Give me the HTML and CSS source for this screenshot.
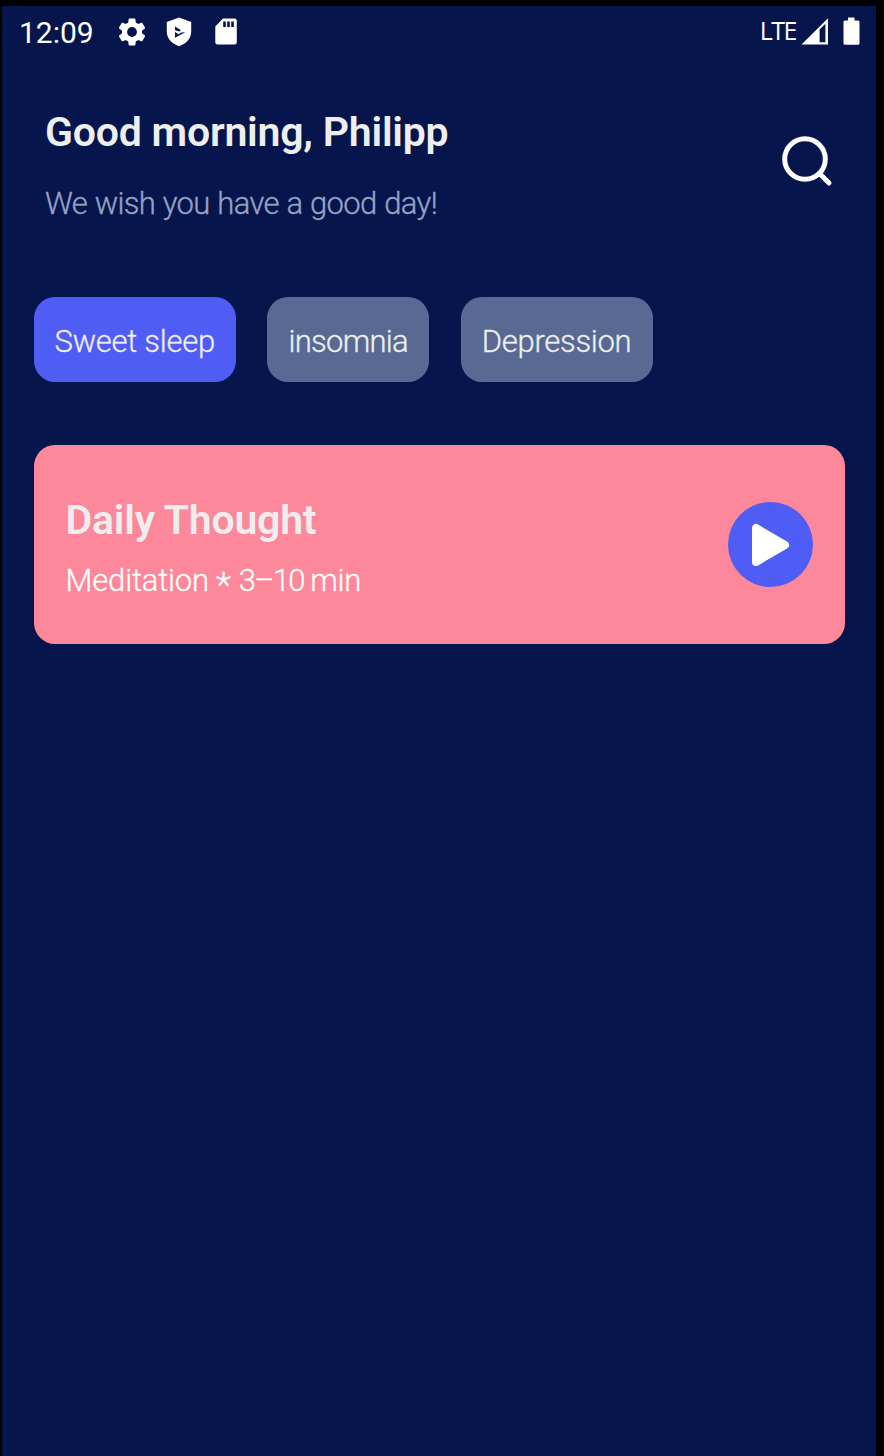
FILE: index.html
```html
<!DOCTYPE html>
<html lang="en">
<head>
<meta charset="utf-8">
<title>Meditation</title>
<link rel="stylesheet" href="styles.css">
</head>
<body>
<div class="screen">
  <div class="status-bar">
    <span class="clock">12:09</span>
    <svg class="gear" width="28" height="28" viewBox="2 2 20 20" fill="#fff"><path d="M19.14 12.94c.04-.3.06-.61.06-.94s-.02-.64-.07-.94l2.03-1.58a.49.49 0 0 0 .12-.61l-1.92-3.32a.49.49 0 0 0-.59-.22l-2.39.96a7 7 0 0 0-1.62-.94l-.36-2.54a.48.48 0 0 0-.48-.41h-3.84a.48.48 0 0 0-.47.41l-.36 2.54c-.59.24-1.13.57-1.62.94l-2.39-.96a.49.49 0 0 0-.59.22L2.74 8.87a.49.49 0 0 0 .12.61l2.03 1.58a7.5 7.5 0 0 0 0 1.88l-2.03 1.58a.49.49 0 0 0-.12.61l1.92 3.32c.12.22.37.29.59.22l2.39-.96c.5.38 1.03.7 1.62.94l.36 2.54c.05.24.24.41.48.41h3.84c.24 0 .44-.17.47-.41l.36-2.54c.59-.24 1.13-.56 1.62-.94l2.39.96c.22.08.47 0 .59-.22l1.92-3.32a.49.49 0 0 0-.12-.61zM12 15.500a3.500 3.500 0 1 1 0-7 3.500 3.500 0 0 1 0 7z"/></svg>
    <svg class="shield" width="26" height="30" viewBox="0 0 26 30"><path fill="#fff" d="M13 .5 25.200 5v9.500c0 6.700-4.700 12.200-12.200 14.700C5.500 26.700.8 21.200.8 14.500V5z"/><path fill="#06154b" d="M9 9.500 14.800 13l-1.300 1.500L9 13.200zM15.500 15.500l3.800-.3L9 20.800V15l3.500 2.200z"/></svg>
    <svg class="sd" width="22" height="27" viewBox="0 0 22 27"><path fill="#fff" d="M8 .5h11.500a2.300 2.300 0 0 1 2.300 2.300v21.400a2.300 2.300 0 0 1-2.300 2.300h-17A2.300 2.300 0 0 1 .3 24.200V8.500z"/><path stroke="#06154b" stroke-width="2.600" d="M9.500 3.500V9M13.500 3.500V9M17.500 3.500V9"/></svg>
    <span class="network">LTE</span>
    <svg class="signal" width="28" height="27" viewBox="0 0 28 27"><path fill="#fff" fill-rule="evenodd" d="M.5 26.500 27 .3v26.200zM18.600 11.500v12.800h5.800V5.800z"/></svg>
    <svg class="battery" width="17" height="28" viewBox="0 0 17 28"><path fill="#fff" d="M5 .5h6.500v3H15a1.500 1.500 0 0 1 1.500 1.500v21.200a1.500 1.500 0 0 1-1.500 1.500H2A1.500 1.500 0 0 1 .5 26.200V5A1.500 1.500 0 0 1 2 3.500h3z"/></svg>
  </div>
  <header class="header">
    <div>
      <h1 class="title">Good morning, Philipp</h1>
      <p class="subtitle">We wish you have a good day!</p>
    </div>
    <svg class="search" width="52" height="52" viewBox="0 0 52 52" fill="none" stroke="#fff" stroke-width="5" stroke-linecap="round"><circle cx="24" cy="24" r="20.300"/><path d="m38.500 38.500 9.500 9.500"/></svg>
  </header>
  <nav class="chips">
    <div class="chip active">Sweet sleep</div>
    <div class="chip insomnia">insomnia</div>
    <div class="chip depression">Depression</div>
  </nav>
  <section class="card">
    <div class="card-text">
      <h2 class="title">Daily Thought</h2>
      <p class="detail">Meditation <span class="star">*</span> <span class="range">3–10</span> min</p>
    </div>
    <div class="play"><svg width="39" height="44" viewBox="0 0 39 44"><path fill="#fff" stroke="#fff" stroke-width="8" stroke-linejoin="round" d="M5 5v34l29-17z"/></svg></div>
  </section>
</div>
</body>
</html>
```
FILE: styles.css
```css
* { box-sizing: border-box; }
body {
  margin: 0;
  padding: 6px 8px 0 2px;
  height: 1456px;
  background: #000;
  font-family: Roboto, sans-serif;
  overflow: hidden;
}
h1, h2, p { margin: 0; }
svg { display: block; flex: none; }
.screen { height: 1450px; background: #06154b; }
.status-bar {
  display: flex;
  align-items: center;
  height: 51px;
  padding: 0 16px 0 17px;
  color: #fff;
}
.clock { width: 75px; font-size: 30px; line-height: 36px; white-space: nowrap; margin-top: 2px; }
.gear { margin-left: 24px; }
.shield { margin-left: 20px; }
.sd { margin-left: 23px; }
.network { margin: -4px 0 0 auto; font-family: "Open Sans", sans-serif; font-size: 25px; letter-spacing: -1.500px; }
.signal { margin-left: 5px; margin-top: -1px; }
.battery { margin-left: 14px; margin-top: -1px; }
.header {
  display: flex;
  justify-content: space-between;
  padding: 50px 43px 0 43px;
  height: 234.300px;
}
.title { font-weight: 600; font-size: 41px; line-height: 50px; letter-spacing: -0.220px; color: #eee; white-space: nowrap; }
.subtitle { margin-top: 29px; font-weight: 300; font-size: 31px; line-height: 36px; letter-spacing: -0.650px; word-spacing: 0.700px; color: #95a2c6; -webkit-text-stroke: 0.350px #95a2c6; white-space: nowrap; }
.search { margin-top: 28px; }
.chips { display: flex; gap: 31.400px; padding-left: 31.500px; margin-top: 6px; }
.chip {
  display: flex;
  align-items: center;
  width: 202.500px;
  height: 85px;
  padding-left: 21px;
  padding-top: 4px;
  border-radius: 21px;
  background: #586a94;
  color: #eee;
  font-weight: 300;
  font-size: 31px;
  letter-spacing: -0.250px;
  -webkit-text-stroke: 0.300px #eee;
  white-space: nowrap;
}
.active { background: #505df5; }
.insomnia { width: 162px; letter-spacing: -0.700px; }
.depression { width: 192px; letter-spacing: -0.300px; }
.card {
  display: flex;
  justify-content: space-between;
  align-items: center;
  height: 198.500px;
  margin: 63.100px 31.500px 0;
  padding: 0 32px;
  border-radius: 21px;
  background: #fd889b;
}
.card-text { padding-top: 5px; }
.detail { margin-top: 18px; font-weight: 300; font-size: 31px; line-height: 36px; letter-spacing: -0.150px; color: #fff; -webkit-text-stroke: 0.300px #fff; white-space: nowrap; }
.star { display: inline-block; margin: 0 1px; transform: translateY(5px) scale(1.150); }
.range { letter-spacing: -1.700px; margin-right: -1px; }
.play {
  display: flex;
  align-items: center;
  justify-content: center;
  width: 85px;
  height: 85px;
  border-radius: 50%;
  background: #505df5;
}
```
